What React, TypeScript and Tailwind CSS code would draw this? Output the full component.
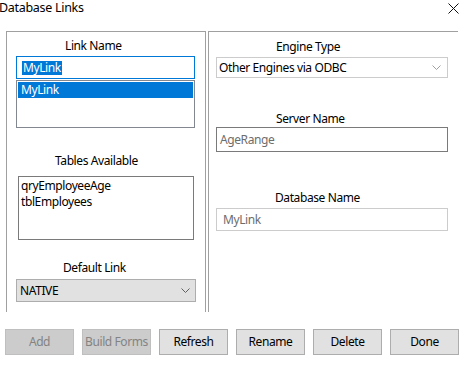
import React from "react";

const font = { fontFamily: '"Noto Sans", "Open Sans", sans-serif' };

function Chevron({ color = "#606060" }: { color?: string }) {
  return (
    <svg width="9" height="5" viewBox="0 0 9 5" className="shrink-0">
      <path d="M0.5 0.5 L4.5 4.5 L8.5 0.5" fill="none" stroke={color} strokeWidth="1" />
    </svg>
  );
}

function Btn({ label, disabled }: { label: string; disabled?: boolean }) {
  return (
    <div
      className={
        disabled
          ? "w-[69px] h-[26px] shrink-0 whitespace-nowrap flex items-center justify-center border border-[#bfbfbf] bg-[#cccccc] text-[#838383]"
          : "w-[69px] h-[26px] shrink-0 whitespace-nowrap flex items-center justify-center border border-[#adadad] bg-[#e1e1e1] text-black"
      }
    >
      {label}
    </div>
  );
}

export default function App() {
  return (
    <div className="w-[469px] h-[372px] bg-white text-[12px] leading-[16px] tracking-[-0.4px] text-black overflow-hidden" style={font}>
      {/* title bar */}
      <div className="h-[31px] flex items-start justify-between">
        <div className="ml-[-1px] mt-[0px] text-[12.5px] tracking-[-0.3px]">Database Links</div>
        <svg width="11" height="11" viewBox="0 0 11 11" className="mt-[3px] mr-[10px]">
          <path d="M0.5 0.5 L10.5 10.5 M10.5 0.5 L0.5 10.5" stroke="#111" strokeWidth="1" />
        </svg>
      </div>

      <div className="flex pl-[6px] h-[281px]">
        {/* left panel */}
        <div className="w-[200px] h-full shrink-0 border-t border-l border-r border-[#a0a0a0] flex flex-col">
          <div className="mt-[6px] pl-[58px] whitespace-nowrap">Link Name</div>
          <div className="ml-[9px] mt-[2px] w-[179px] h-[23px] border border-[#0078d7] flex items-center pl-[5px]">
            <span className="bg-[#0078d7] text-white leading-[14px] px-[1px]">MyLink</span>
          </div>
          <div className="ml-[9px] mt-[1px] w-[179px] h-[48px] border border-[#828790] p-[1px]">
            <div className="bg-[#0078d7] text-white h-[16px] leading-[15px] pl-[3px]">MyLink</div>
          </div>
          <div className="mt-[25px] pl-[48px] whitespace-nowrap">Tables Available</div>
          <div className="ml-[11px] mt-[7px] w-[176px] h-[64px] border border-[#7a7a7a] pl-[2px] pt-[1px] flex flex-col">
            <div className="leading-[16px]">qryEmployeeAge</div>
            <div className="leading-[16px]">tblEmployees</div>
          </div>
          <div className="mt-[20px] pl-[56px] whitespace-nowrap">Default Link</div>
          <div className="ml-[9px] mt-[3px] w-[180px] h-[23px] border border-[#adadad] bg-[#e1e1e1] flex items-center justify-between pl-[3px] pr-[5px]">
            <span>NATIVE</span>
            <Chevron />
          </div>
        </div>

        {/* right panel */}
        <div className="ml-[2px] w-[250px] h-full shrink-0 border-t border-l border-[#a0a0a0] flex flex-col">
          <div className="mt-[7px] pl-[67px] whitespace-nowrap">Engine Type</div>
          <div className="ml-[7px] mt-[2px] w-[232px] h-[21px] border border-[#cccccc] bg-white flex items-center justify-between pl-[2px] pr-[6px]">
            <span>Other Engines via ODBC</span>
            <Chevron color="#a0a0a0" />
          </div>
          <div className="mt-[33px] pl-[67px] whitespace-nowrap">Server Name</div>
          <div className="ml-[7px] w-[232px] h-[25px] border border-[#7a7a7a] flex items-center pl-[3px] text-[#6d6d6d]">
            AgeRange
          </div>
          <div className="mt-[38px] pl-[66px] whitespace-nowrap">Database Name</div>
          <div className="ml-[7px] mt-[2px] w-[232px] h-[23px] border border-[#cccccc] flex items-center pl-[6px] text-[#6d6d6d]">
            MyLink
          </div>
        </div>
      </div>

      {/* buttons */}
      <div className="flex gap-[8px] pl-[5px] mt-[17px]">
        <Btn label="Add" disabled />
        <Btn label="Build Forms" disabled />
        <Btn label="Refresh" />
        <Btn label="Rename" />
        <Btn label="Delete" />
        <Btn label="Done" />
      </div>
    </div>
  );
}
